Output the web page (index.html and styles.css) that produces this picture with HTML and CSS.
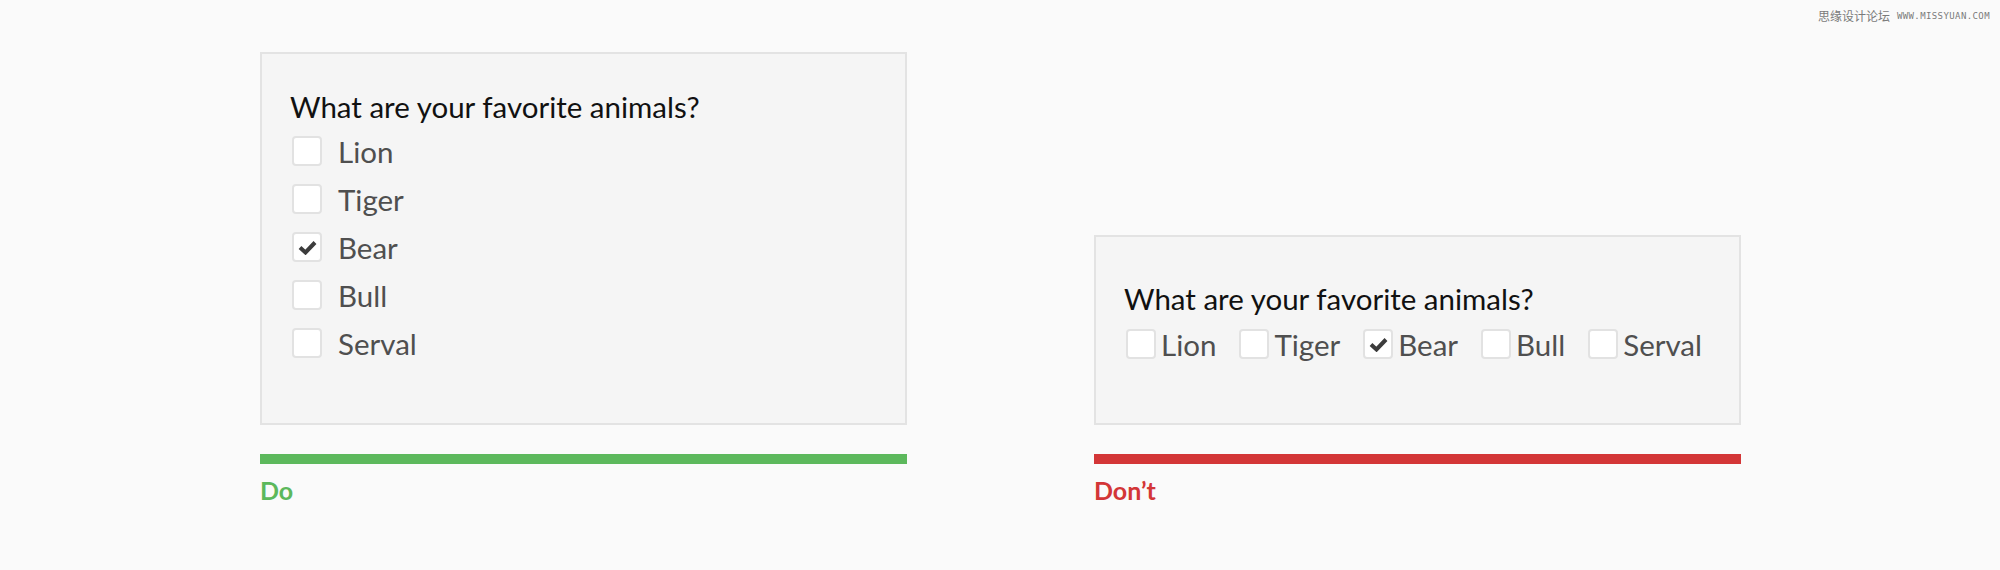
FILE: index.html
```html
<!DOCTYPE html>
<html lang="en">
  <head>
    <meta charset="UTF-8" />
    <title>Checkbox layout: Do and Don't</title>
    <link rel="stylesheet" href="styles.css">
  </head>
  <body>
    <div class="topbar">
      <span class="wm-cn">思缘设计论坛</span>
      <span class="wm-en">WWW.MISSYUAN.COM</span>
    </div>

    <div class="examples">
      <div class="example">
        <div class="card card-stacked">
          <div class="question">What are your favorite animals?</div>
          <div class="options options-stacked">
            <label class="option"><span class="box"></span>Lion</label>
            <label class="option"><span class="box"></span>Tiger</label>
            <label class="option">
              <span class="box">
                <svg width="19" height="15" viewBox="0 0 19 15"><polyline points="2,7.5 7.5,12.5 17,2.5" fill="none" stroke="#3c3c3c" stroke-width="4" /></svg>
              </span>Bear
            </label>
            <label class="option"><span class="box"></span>Bull</label>
            <label class="option"><span class="box"></span>Serval</label>
          </div>
        </div>
        <div class="bar bar-do"></div>
        <div class="verdict verdict-do">Do</div>
      </div>

      <div class="example">
        <div class="card card-inline">
          <div class="question">What are your favorite animals?</div>
          <div class="options options-inline">
            <label class="option"><span class="box"></span>Lion</label>
            <label class="option"><span class="box"></span>Tiger</label>
            <label class="option">
              <span class="box">
                <svg width="19" height="15" viewBox="0 0 19 15"><polyline points="2,7.5 7.5,12.5 17,2.5" fill="none" stroke="#3c3c3c" stroke-width="4" /></svg>
              </span>Bear
            </label>
            <label class="option"><span class="box"></span>Bull</label>
            <label class="option"><span class="box"></span>Serval</label>
          </div>
        </div>
        <div class="bar bar-dont"></div>
        <div class="verdict verdict-dont">Don’t</div>
      </div>
    </div>
  </body>
</html>
```

FILE: styles.css
```css
* {
  box-sizing: border-box;
  font-family: Lato, "Noto Sans", sans-serif;
}

body {
  margin: 0;
  padding: 0;
  background-color: #fafafa;
  width: 2000px;
  height: 570px;
  overflow: hidden;
}

.topbar {
  height: 52px;
  display: flex;
  justify-content: flex-end;
  align-items: flex-start;
  gap: 7px;
  padding: 9px 10px 0 0;
  color: #7a7a7a;
}

.wm-cn {
  font-family: "Noto Sans CJK SC", sans-serif;
  font-size: 12px;
  line-height: 14px;
}

.wm-en {
  font-family: "DejaVu Sans Mono", monospace;
  font-size: 9px;
  line-height: 14px;
  letter-spacing: 0.4px;
}

.examples {
  display: flex;
  align-items: flex-end;
  gap: 187px;
  padding-left: 260px;
}

.example {
  width: 647px;
}

.card {
  background: #f5f5f5;
  border: 2px solid #e3e3e3;
  padding-left: 28px;
  padding-right: 28px;
}

.card-stacked {
  padding-top: 36px;
  padding-bottom: 65px;
}

.card-inline {
  padding-top: 45px;
  padding-bottom: 64px;
}

.question {
  font-size: 29.5px;
  line-height: 34px;
  color: #111;
}

.options {
  display: flex;
}

.options-stacked {
  flex-direction: column;
  gap: 18px;
  margin-top: 12px;
}

.options-inline {
  gap: 21px;
  margin-top: 13px;
}

.option {
  display: flex;
  align-items: center;
  height: 30px;
  font-size: 29.5px;
  color: #4f4f4f;
}

.options-stacked .option {
  gap: 16px;
}

.options-inline .option {
  gap: 5px;
}

.box {
  width: 30px;
  height: 30px;
  margin-left: 2px;
  background: #fff;
  border: 2px solid #e2e2e2;
  border-radius: 4px;
  display: flex;
  justify-content: center;
  align-items: center;
}

.bar {
  height: 10px;
  margin-top: 29px;
}

.bar-do {
  background-color: #5cb85c;
}

.bar-dont {
  background-color: #d33637;
}

.verdict {
  margin-top: 11px;
  font-size: 25px;
  line-height: 30px;
  font-weight: bold;
}

.verdict-do {
  color: #5cb85c;
}

.verdict-dont {
  color: #d33637;
}
```
